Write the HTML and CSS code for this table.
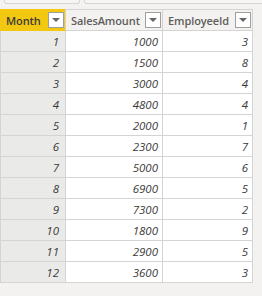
FILE: index.html
```html
<!DOCTYPE html>
<html>
<head>
<meta charset="utf-8">
<link rel="stylesheet" href="styles.css">
</head>
<body>
<div class="tabs">
  <div class="tab tab-a"></div>
  <div class="tab tab-b"></div>
</div>
<table class="grid">
  <thead>
    <tr>
      <th class="h-month"><div class="hc"><span>Month</span><span class="dd"><svg width="8" height="4" viewBox="0 0 8 4"><path d="M0 0H8L4 4Z" fill="#666"/></svg></span></div></th>
      <th class="h-sales"><div class="hc"><span>SalesAmount</span><span class="dd"><svg width="8" height="4" viewBox="0 0 8 4"><path d="M0 0H8L4 4Z" fill="#666"/></svg></span></div></th>
      <th class="h-emp"><div class="hc"><span>EmployeeId</span><span class="dd"><svg width="8" height="4" viewBox="0 0 8 4"><path d="M0 0H8L4 4Z" fill="#666"/></svg></span></div></th>
    </tr>
  </thead>
  <tbody>
    <tr><td class="c1">1</td><td>1000</td><td>3</td></tr>
    <tr><td class="c1">2</td><td>1500</td><td>8</td></tr>
    <tr><td class="c1">3</td><td>3000</td><td>4</td></tr>
    <tr><td class="c1">4</td><td>4800</td><td>4</td></tr>
    <tr><td class="c1">5</td><td>2000</td><td>1</td></tr>
    <tr><td class="c1">6</td><td>2300</td><td>7</td></tr>
    <tr><td class="c1">7</td><td>5000</td><td>6</td></tr>
    <tr><td class="c1">8</td><td>6900</td><td>5</td></tr>
    <tr><td class="c1">9</td><td>7300</td><td>2</td></tr>
    <tr><td class="c1">10</td><td>1800</td><td>9</td></tr>
    <tr><td class="c1">11</td><td>2900</td><td>5</td></tr>
    <tr><td class="c1">12</td><td>3600</td><td>3</td></tr>
  </tbody>
</table>
</body>
</html>
```

FILE: styles.css
```css
html, body {
  margin: 0;
  padding: 0;
  background: #f3f2f1;
  font-family: "Open Sans", "Noto Sans", sans-serif;
}
body {
  width: 262px;
  height: 296px;
  overflow: hidden;
}
.tabs {
  display: flex;
  gap: 4px;
  height: 4px;
  padding-left: 4px;
  margin-bottom: 5px;
}
.tab {
  height: 3px;
  border: 1px solid #d6d5d3;
  border-top: none;
  border-radius: 0 0 3px 3px;
  background: #f6f5f4;
}
.tab-a { width: 74px; }
.tab-b { flex: 1; margin-right: -4px; }
.grid {
  border-collapse: collapse;
  table-layout: fixed;
  width: 253px;
}
.grid th, .grid td {
  border: 1px solid #d4d4d4;
  height: 21px;
  padding: 0;
  box-sizing: border-box;
}
.grid th {
  background: #f3f2f1;
  font-size: 11px;
  font-weight: 600;
  color: #605e5c;
  text-align: left;
  letter-spacing: -0.1px;
}
.grid th.h-month {
  background: #f2c811;
  color: #3b3a39;
  border-color: #f2c811;
  border-right-color: #d4d4d4;
}
.h-month { width: 65px; }
.h-sales { width: 97px; }
.h-emp { width: 90px; }
.hc {
  display: flex;
  align-items: center;
  justify-content: space-between;
  padding: 0 1px 0 5px;
}
.dd {
  width: 14px;
  height: 14px;
  border: 1px solid #a19f9d;
  background: #ffffff;
  display: flex;
  align-items: center;
  justify-content: center;
}
.grid td {
  background: #ffffff;
  font-size: 11.5px;
  font-style: italic;
  color: #3b3a39;
  text-align: right;
  padding-right: 4px;
}
.grid td.c1 {
  background: #eaeae9;
  padding-right: 6px;
}
```
